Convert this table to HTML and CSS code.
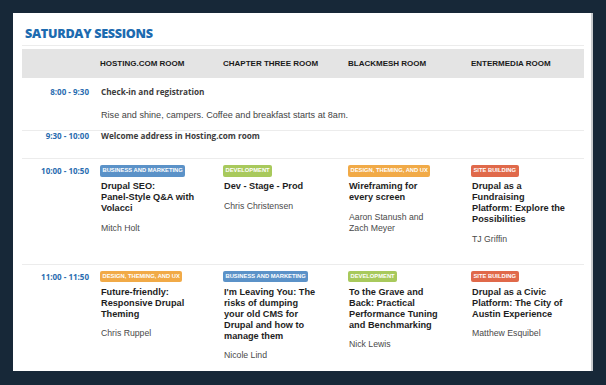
FILE: index.html
```html
<!DOCTYPE html>
<html lang="en">
<head>
<meta charset="utf-8">
<title>Saturday Sessions</title>
<link rel="stylesheet" href="styles.css">
</head>
<body>
<div class="panel">
  <h1 class="title">SATURDAY SESSIONS</h1>
  <div class="cols head">
    <div></div>
    <div>HOSTING.COM ROOM</div>
    <div>CHAPTER THREE ROOM</div>
    <div>BLACKMESH ROOM</div>
    <div>ENTERMEDIA ROOM</div>
  </div>

  <div class="cols row row-checkin">
    <div class="time">8:00 - 9:30</div>
    <div class="span">
      <div class="event">Check-in and registration</div>
      <div class="desc">Rise and shine, campers. Coffee and breakfast starts at 8am.</div>
    </div>
  </div>

  <div class="cols row row-welcome">
    <div class="time">9:30 - 10:00</div>
    <div class="span">
      <div class="event">Welcome address in Hosting.com room</div>
    </div>
  </div>

  <div class="cols row row-sessions">
    <div class="time">10:00 - 10:50</div>
    <div class="session">
      <span class="badge biz">Business and Marketing</span>
      <div class="stitle">Drupal SEO: Panel&#8209;Style Q&amp;A with Volacci</div>
      <div class="speaker">Mitch Holt</div>
    </div>
    <div class="session">
      <span class="badge dev">Development</span>
      <div class="stitle">Dev - Stage - Prod</div>
      <div class="speaker">Chris Christensen</div>
    </div>
    <div class="session">
      <span class="badge design">Design, Theming, and UX</span>
      <div class="stitle">Wireframing for every screen</div>
      <div class="speaker">Aaron Stanush and Zach Meyer</div>
    </div>
    <div class="session">
      <span class="badge site">Site Building</span>
      <div class="stitle">Drupal as a Fundraising Platform: Explore the Possibilities</div>
      <div class="speaker">TJ Griffin</div>
    </div>
  </div>

  <div class="cols row row-sessions">
    <div class="time">11:00 - 11:50</div>
    <div class="session">
      <span class="badge design">Design, Theming, and UX</span>
      <div class="stitle">Future&#8209;friendly: Responsive Drupal Theming</div>
      <div class="speaker">Chris Ruppel</div>
    </div>
    <div class="session">
      <span class="badge biz">Business and Marketing</span>
      <div class="stitle">I'm Leaving You: The risks of dumping your old CMS for Drupal and how to manage them</div>
      <div class="speaker">Nicole Lind</div>
    </div>
    <div class="session">
      <span class="badge dev">Development</span>
      <div class="stitle">To the Grave and Back: Practical Performance Tuning and Benchmarking</div>
      <div class="speaker">Nick Lewis</div>
    </div>
    <div class="session">
      <span class="badge site">Site Building</span>
      <div class="stitle">Drupal as a Civic Platform: The City of Austin Experience</div>
      <div class="speaker">Matthew Esquibel</div>
    </div>
  </div>
</div>
</body>
</html>
```
FILE: styles.css
```css
html, body {
  margin: 0;
  padding: 0;
}
body {
  background: #172838;
  padding: 13px 0 0 13px;
  font-family: "Liberation Sans", Arial, sans-serif;
}
.panel {
  width: 580px;
  height: 358px;
  box-sizing: border-box;
  background: #ffffff;
  border-right: 2px solid #c7cbce;
  padding: 0 7px 0 9px;
  overflow: hidden;
}
.title {
  margin: 0 0 3px;
  padding: 11px 3px 1px;
  font-family: "Open Sans", sans-serif;
  font-weight: 800;
  font-size: 12.6px;
  line-height: 20px;
  color: #1d6bb0;
  border-bottom: 1px solid #ececec;
  letter-spacing: -0.3px;
}
.cols {
  display: grid;
  grid-template-columns: 78px 123px 125px 123px 113px;
}
.head {
  height: 29px;
  align-items: center;
  background: #e4e4e4;
  font-size: 8px;
  font-weight: 700;
  color: #1a1a1a;
}
.row {
  border-bottom: 1px solid #ececec;
}
.time {
  text-align: right;
  padding-right: 11px;
  font-family: "Open Sans", sans-serif;
  font-weight: 700;
  font-size: 8px;
  line-height: 12px;
  color: #2a6db0;
}
.span {
  grid-column: 2 / 6;
  padding-left: 1px;
}
.event {
  font-family: "Open Sans", sans-serif;
  font-weight: 700;
  font-size: 8.2px;
  line-height: 12px;
  color: #3c3c3c;
}
.desc {
  margin-top: 11px;
  font-size: 9.1px;
  line-height: 12px;
  color: #444;
}
.row-checkin {
  padding: 8px 0 9px;
}
.row-welcome {
  padding: 0 0 17px;
}
.row-welcome .time,
.row-welcome .event {
  line-height: 10px;
}
.row-sessions {
  padding: 6px 0 19px;
}
.session {
  padding-right: 10px;
}
.badge {
  display: block;
  width: fit-content;
  height: 11.5px;
  line-height: 11.5px;
  padding: 0 2.5px;
  border-radius: 2px;
  font-size: 5.8px;
  font-weight: 700;
  text-transform: uppercase;
  color: #ffffff;
}
.biz { background: #5b92c8; }
.dev { background: #a8c95c; }
.design { background: #f1aa47; }
.site { background: #e0694a; }
.stitle {
  max-width: 94.4px;
  margin-top: 4.5px;
  padding-left: 1px;
  font-size: 9.2px;
  font-weight: 700;
  line-height: 11px;
  color: #1e1e1e;
}
.speaker {
  margin-top: 8.5px;
  padding-left: 1px;
  max-width: 94px;
  font-size: 8.7px;
  line-height: 11px;
  color: #4a4a4a;
}
```
